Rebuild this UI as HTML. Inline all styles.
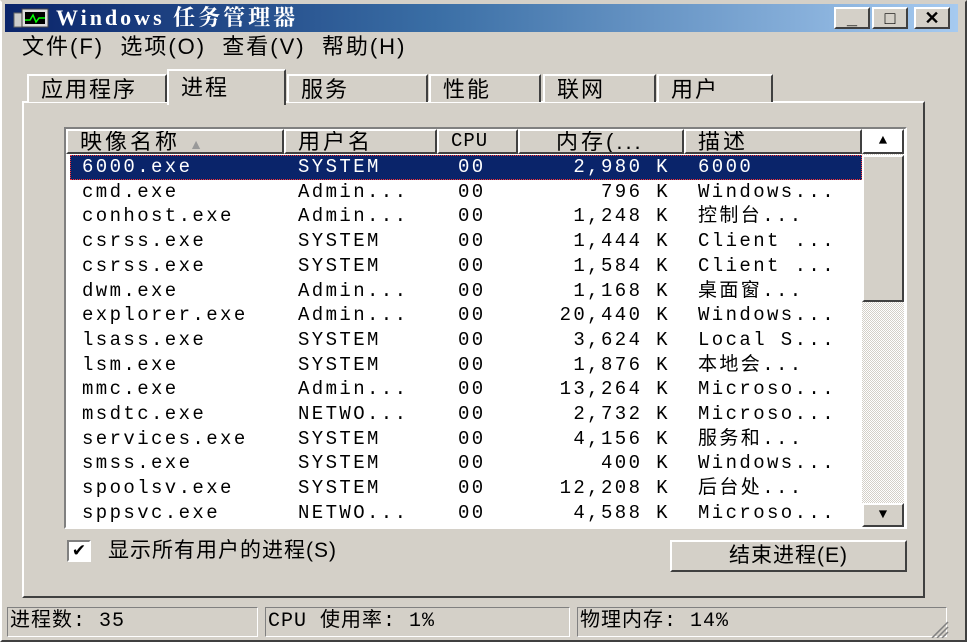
<!DOCTYPE html>
<html><head><meta charset="utf-8"><style>
*{margin:0;padding:0;box-sizing:border-box}
body{width:967px;height:642px;background:#d4d0c8;position:relative;overflow:hidden;font-family:"Liberation Mono","Noto Sans CJK SC",monospace;color:#000}
.a{position:absolute;white-space:nowrap}
.cj{font-family:"Liberation Sans","Noto Sans CJK SC",sans-serif;font-size:21px;letter-spacing:4px}
.raise{border:2px solid;border-color:#fff #404040 #404040 #fff;background:#d4d0c8}
.sunk{border:1px solid;border-color:#808080 #fff #fff #808080}
.row{position:absolute;left:70px;width:792px;height:25px;font-size:19px;letter-spacing:2.4px;line-height:25px}
.row span{position:absolute;top:0}
.c1{left:12px}.c2{left:228px}.c3{left:388px}.c4{right:192px;text-align:right}.c5{left:628px}
.hd{position:absolute;top:129px;height:25px;border:2px solid;border-color:#fff #404040 #404040 #fff;background:#d4d0c8;font-family:"Liberation Sans","Noto Sans CJK SC",sans-serif;font-size:22px;letter-spacing:3px;line-height:21px;padding-left:12px;overflow:hidden}
.tab{position:absolute;border:2px solid;border-bottom:none;border-color:#fff #404040 #404040 #fff;background:#d4d0c8;font-family:"Liberation Sans","Noto Sans CJK SC",sans-serif;font-size:22px;letter-spacing:2px;padding-left:12px;line-height:28px}
.btn{position:absolute;top:7px;width:36px;height:22px;border:2px solid;border-color:#fff #404040 #404040 #fff;background:#d4d0c8;font:bold 18px "Liberation Sans",sans-serif;text-align:center;line-height:18px}
.st{font-family:"Liberation Mono","Noto Sans CJK SC",monospace;font-size:20px;line-height:26px;letter-spacing:1px}
</style></head><body>
<div class="a" style="left:0;top:0;width:967px;height:642px;border:2px solid;border-color:#d4d0c8 #404040 #404040 #fff"></div>
<div class="a" style="left:5px;top:4px;width:953px;height:28px;background:linear-gradient(90deg,#0a246a,#3a6ea5 45%,#a6caf0)"></div>
<svg class="a" style="left:12px;top:7px" width="40" height="24"><rect x="2" y="6" width="8" height="14" fill="#ccc" stroke="#666"/><rect x="10" y="2" width="26" height="18" fill="#ddd" stroke="#444"/><rect x="13" y="5" width="20" height="12" fill="#000"/><polyline points="13,13 18,13 21,8 24,15 27,11 33,11" stroke="#0f0" fill="none" stroke-width="1.5"/></svg>
<div class="a" style="left:56px;top:5px;color:#fff;font:bold 22px 'Liberation Serif','Noto Serif CJK SC',serif;letter-spacing:3px;line-height:26px">Windows 任务管理器</div>
<div class="btn" style="left:834px">_</div>
<div class="btn" style="left:872px">□</div>
<div class="btn" style="left:914px">✕</div>
<div class="a cj" style="left:22px;top:34px;line-height:26px;font-size:22px;letter-spacing:2px">文件(F)&nbsp; 选项(O)&nbsp; 查看(V)&nbsp; 帮助(H)</div>

<div class="a" style="left:22px;top:101px;width:903px;height:497px;border:2px solid;border-color:#fff #404040 #404040 #fff"></div>
<div class="tab" style="left:27px;top:74px;width:140px;height:28px">应用程序</div>
<div class="tab" style="left:287px;top:74px;width:141px;height:28px">服务</div>
<div class="tab" style="left:429px;top:74px;width:112px;height:28px">性能</div>
<div class="tab" style="left:543px;top:74px;width:113px;height:28px">联网</div>
<div class="tab" style="left:657px;top:74px;width:116px;height:28px">用户</div>
<div class="tab" style="left:167px;top:69px;width:119px;height:36px;border-bottom:none;line-height:34px">进程</div>

<div class="a" style="left:64px;top:127px;width:843px;height:402px;border:2px solid;border-color:#808080 #fff #fff #808080;background:#fff"></div>
<div class="hd" style="left:66px;width:218px">映像名称 <span style="color:#999;font-size:14px">▲</span></div>
<div class="hd" style="left:284px;width:153px">用户名</div>
<div class="hd" style="left:437px;width:81px;font-family:'Liberation Mono',monospace;font-size:19px;letter-spacing:1px">CPU</div>
<div class="hd" style="left:518px;width:166px;padding-left:36px">内存(...</div>
<div class="hd" style="left:684px;width:178px">描述</div>
<div class="a" style="left:862px;top:129px;width:42px;height:25px;border:2px solid;border-color:#fff #404040 #404040 #fff;text-align:center;font-size:14px;line-height:20px">▲</div>
<div class="a" style="left:862px;top:154px;width:42px;height:351px;background:repeating-conic-gradient(#fff 0 25%,#d4d0c8 0 50%) 0 0/2px 2px"></div>
<div class="a" style="left:862px;top:155px;width:42px;height:147px;border:2px solid;border-color:#fff #404040 #404040 #fff;background:#d4d0c8"></div>
<div class="a" style="left:862px;top:503px;width:42px;height:24px;border:2px solid;border-color:#fff #404040 #404040 #fff;background:#d4d0c8;text-align:center;font-size:14px;line-height:20px">▼</div>

<div class="row" style="top:155px;background:#0a246a;color:#fff;outline:1px dotted #f33;outline-offset:-1px"><span class="c1">6000.exe</span><span class="c2">SYSTEM</span><span class="c3">00</span><span class="c4">2,980 K</span><span class="c5">6000</span></div>
<div class="row" style="top:179.7px"><span class="c1">cmd.exe</span><span class="c2">Admin...</span><span class="c3">00</span><span class="c4">796 K</span><span class="c5">Windows...</span></div>
<div class="row" style="top:204.4px"><span class="c1">conhost.exe</span><span class="c2">Admin...</span><span class="c3">00</span><span class="c4">1,248 K</span><span class="c5">控制台...</span></div>
<div class="row" style="top:229.1px"><span class="c1">csrss.exe</span><span class="c2">SYSTEM</span><span class="c3">00</span><span class="c4">1,444 K</span><span class="c5">Client ...</span></div>
<div class="row" style="top:253.8px"><span class="c1">csrss.exe</span><span class="c2">SYSTEM</span><span class="c3">00</span><span class="c4">1,584 K</span><span class="c5">Client ...</span></div>
<div class="row" style="top:278.5px"><span class="c1">dwm.exe</span><span class="c2">Admin...</span><span class="c3">00</span><span class="c4">1,168 K</span><span class="c5">桌面窗...</span></div>
<div class="row" style="top:303.2px"><span class="c1">explorer.exe</span><span class="c2">Admin...</span><span class="c3">00</span><span class="c4">20,440 K</span><span class="c5">Windows...</span></div>
<div class="row" style="top:327.9px"><span class="c1">lsass.exe</span><span class="c2">SYSTEM</span><span class="c3">00</span><span class="c4">3,624 K</span><span class="c5">Local S...</span></div>
<div class="row" style="top:352.6px"><span class="c1">lsm.exe</span><span class="c2">SYSTEM</span><span class="c3">00</span><span class="c4">1,876 K</span><span class="c5">本地会...</span></div>
<div class="row" style="top:377.3px"><span class="c1">mmc.exe</span><span class="c2">Admin...</span><span class="c3">00</span><span class="c4">13,264 K</span><span class="c5">Microso...</span></div>
<div class="row" style="top:402px"><span class="c1">msdtc.exe</span><span class="c2">NETWO...</span><span class="c3">00</span><span class="c4">2,732 K</span><span class="c5">Microso...</span></div>
<div class="row" style="top:426.7px"><span class="c1">services.exe</span><span class="c2">SYSTEM</span><span class="c3">00</span><span class="c4">4,156 K</span><span class="c5">服务和...</span></div>
<div class="row" style="top:451.4px"><span class="c1">smss.exe</span><span class="c2">SYSTEM</span><span class="c3">00</span><span class="c4">400 K</span><span class="c5">Windows...</span></div>
<div class="row" style="top:476.1px"><span class="c1">spoolsv.exe</span><span class="c2">SYSTEM</span><span class="c3">00</span><span class="c4">12,208 K</span><span class="c5">后台处...</span></div>
<div class="row" style="top:500.8px"><span class="c1">sppsvc.exe</span><span class="c2">NETWO...</span><span class="c3">00</span><span class="c4">4,588 K</span><span class="c5">Microso...</span></div>

<div class="a" style="left:67px;top:540px;width:24px;height:22px;border:2px solid;border-color:#808080 #fff #fff #808080;background:#fff;font:bold 17px 'DejaVu Sans',sans-serif;text-align:center;line-height:18px">✔</div>
<div class="a cj" style="left:108px;top:537px;font-size:21px;line-height:28px;letter-spacing:1px">显示所有用户的进程(S)</div>
<div class="a raise" style="left:670px;top:540px;width:237px;height:32px;text-align:center"><span class="cj" style="font-size:21px;line-height:28px;letter-spacing:1px">结束进程(E)</span></div>

<div class="a sunk" style="left:7px;top:607px;width:251px;height:30px"></div>
<div class="a sunk" style="left:265px;top:607px;width:305px;height:30px"></div>
<div class="a sunk" style="left:577px;top:607px;width:370px;height:30px"></div>
<div class="a st" style="left:10px;top:609px">进程数: 35</div>
<div class="a st" style="left:268px;top:609px">CPU 使用率: 1%</div>
<div class="a st" style="left:580px;top:609px">物理内存: 14%</div>
<svg class="a" style="left:930px;top:620px" width="20" height="18"><path d="M18 2L2 18M18 7L7 18M18 12L12 18" stroke="#808080" stroke-width="1.5"/></svg>
</body></html>
